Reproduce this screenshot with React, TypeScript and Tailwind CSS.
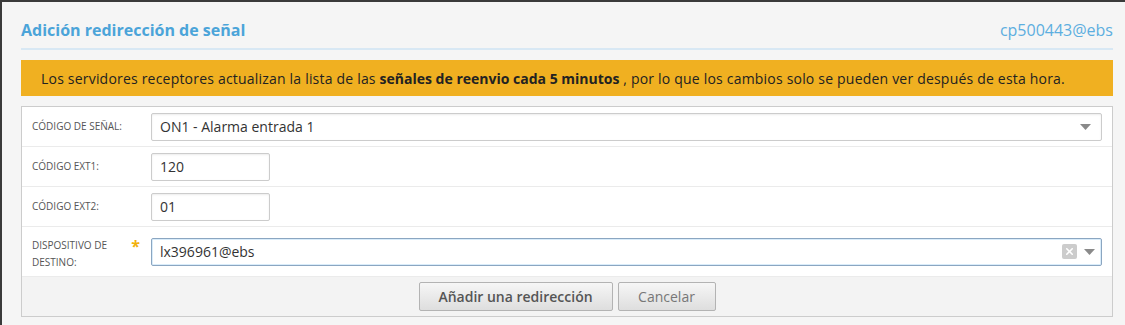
import { X } from 'lucide-react'

function Arrow() {
  return (
    <svg width="11" height="6" viewBox="0 0 11 6" className="shrink-0">
      <path d="M0 0 H11 L5.5 6 Z" fill="#8a8a8a" />
    </svg>
  )
}

function Row({
  label,
  required,
  tall,
  children,
}: {
  label: React.ReactNode
  required?: boolean
  tall?: boolean
  children: React.ReactNode
}) {
  return (
    <div
      className={`flex items-center border-b border-[#ebebeb] ${tall ? 'h-[50px]' : 'h-[40px]'}`}
    >
      <div className="relative w-[129px] shrink-0 pl-[10px] pr-[20px] text-[10px] leading-[17px] uppercase text-[#555]">
        <div className={tall ? 'pt-[5px]' : ''}>{label}</div>
        {required && (
          <span className="absolute right-[11px] top-[4px] text-[16px] font-bold leading-[20px] text-[#f2b10c]">
            *
          </span>
        )}
      </div>
      <div className="flex-1 pr-[10px]">{children}</div>
    </div>
  )
}

export default function App() {
  return (
    <div className="h-[325px] w-[1125px] overflow-hidden border-l-2 border-t-2 border-[#3a3a3a] bg-[#f5f5f5] font-['Open_Sans',sans-serif]">
      <div className="ml-[19px] w-[1092px] pt-[18px]">
        {/* Header */}
        <div className="flex items-end justify-between border-b-2 border-[#d8e8f4] pb-[8px] text-[16px] leading-[20px]">
          <h2 className="font-bold text-[#4ba4d9]">Adición redirección de señal</h2>
          <span className="text-[#5caee0]">cp500443@ebs</span>
        </div>

        {/* Notice */}
        <div className="mt-[10px] flex h-[36px] items-center bg-[#f0b021] px-[20px] text-[14px] tracking-[0.2px] text-[#222]">
          <p>
            Los servidores receptores actualizan la lista de las{' '}
            <b className="font-bold tracking-normal">señales de reenvio cada 5 minutos</b> , por lo
            que los cambios solo se pueden ver después de esta hora.
          </p>
        </div>

        {/* Form */}
        <div className="mt-[10px] border border-[#cccccc] bg-white">
          <Row label="Código de señal:">
            <div className="flex h-[28px] items-center justify-between rounded-[2px] border border-[#cccccc] bg-white pl-[8px] pr-[10px] text-[14px] text-[#333] shadow-[inset_0_1px_2px_rgba(0,0,0,0.08)]">
              <span>ON1 - Alarma entrada 1</span>
              <Arrow />
            </div>
          </Row>
          <Row label="Código EXT1:">
            <div className="flex h-[28px] w-[119px] items-center rounded-[2px] border border-[#cccccc] bg-white pl-[8px] text-[14px] text-[#333] shadow-[inset_0_1px_2px_rgba(0,0,0,0.08)]">
              120
            </div>
          </Row>
          <Row label="Código EXT2:">
            <div className="flex h-[28px] w-[119px] items-center rounded-[2px] border border-[#cccccc] bg-white pl-[8px] text-[14px] text-[#333] shadow-[inset_0_1px_2px_rgba(0,0,0,0.08)]">
              01
            </div>
          </Row>
          <Row
            tall
            required
            label={
              <>
                Dispositivo de
                <br />
                destino:
              </>
            }
          >
            <div className="flex h-[28px] items-center justify-between rounded-[2px] border border-[#8ba6c1] bg-white pl-[8px] pr-[6px] text-[14px] text-[#333] shadow-[inset_0_0_0_1px_#d9ecfa]">
              <span>lx396961@ebs</span>
              <div className="flex items-center gap-[7px]">
                <span className="flex h-[15px] w-[15px] items-center justify-center rounded-[2px] bg-[#cccccc]">
                  <X size={11} strokeWidth={3.5} color="#fff" />
                </span>
                <Arrow />
              </div>
            </div>
          </Row>

          {/* Footer */}
          <div className="flex h-[39px] items-center justify-center gap-[5px] bg-[#f3f3f3]">
            <button className="h-[29px] w-[194px] rounded-[2px] border border-[#b3b3b3] bg-linear-to-b from-[#f6f6f6] to-[#dedede] text-[14px] font-semibold text-[#555]">
              Añadir una redirección
            </button>
            <button className="h-[29px] w-[98px] rounded-[2px] border border-[#b3b3b3] bg-linear-to-b from-[#f6f6f6] to-[#dedede] text-[14px] text-[#777]">
              Cancelar
            </button>
          </div>
        </div>
      </div>
    </div>
  )
}
